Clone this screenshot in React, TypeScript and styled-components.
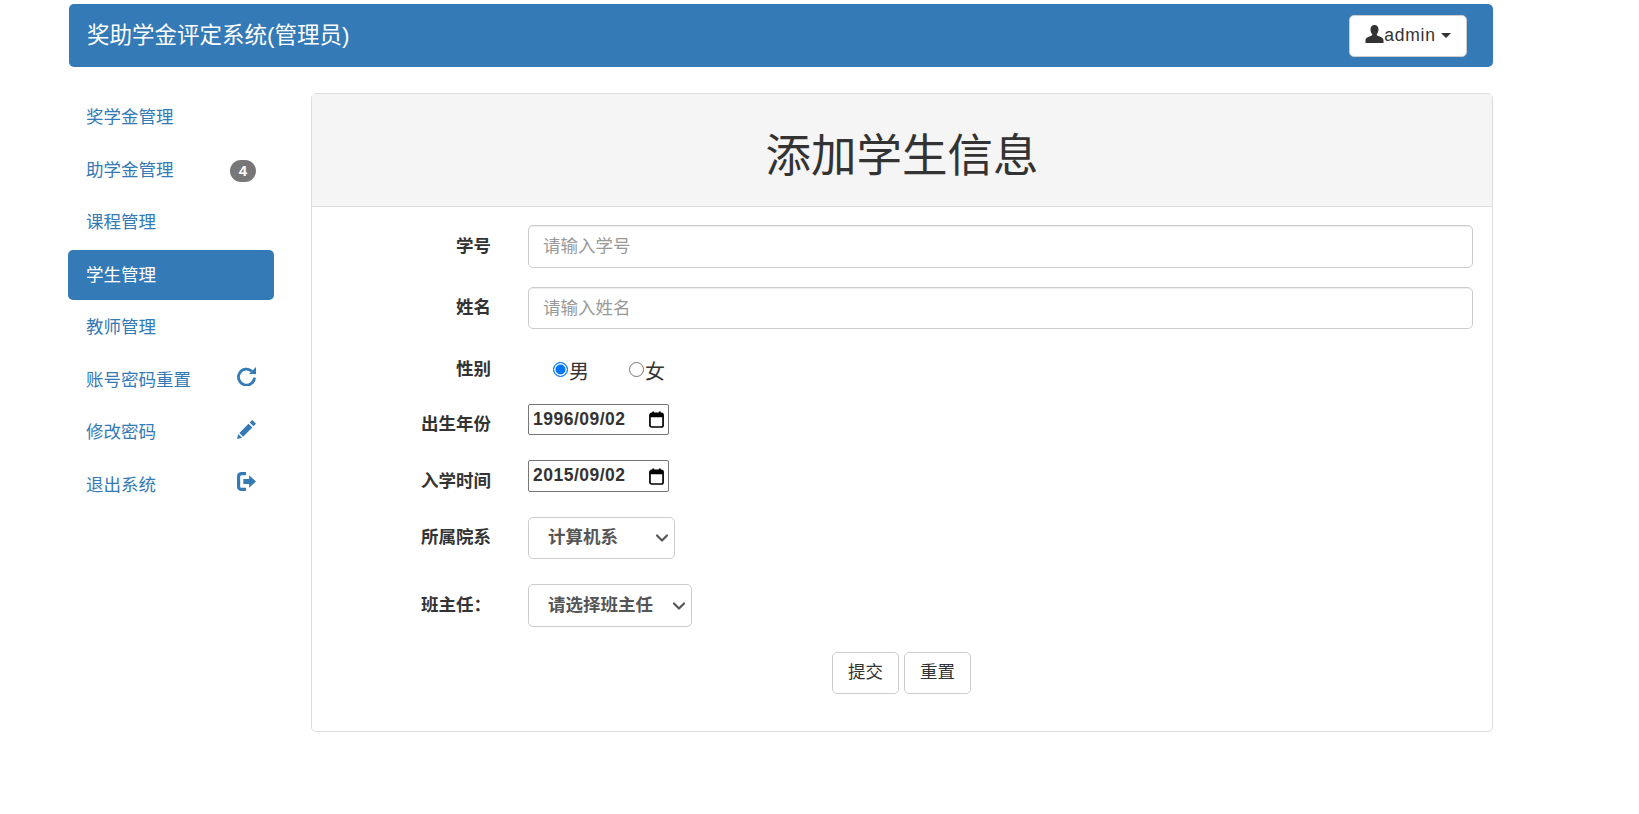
import React from 'react'
import styled, { createGlobalStyle } from 'styled-components'
import { ChevronDown } from 'lucide-react'

const GlobalStyle = createGlobalStyle`
  html, body {
    margin: 0;
    padding: 0;
    background: #fff;
  }
  body {
    font-family: "Liberation Sans", "Noto Sans CJK SC", sans-serif;
    font-size: 17.5px;
    line-height: 1.43;
    color: #333;
  }
  * {
    box-sizing: border-box;
  }
`

const menu = [
  { text: '奖学金管理' },
  { text: '助学金管理', badge: '4' },
  { text: '课程管理' },
  { text: '学生管理', active: true },
  { text: '教师管理' },
  { text: '账号密码重置', icon: 'refresh' },
  { text: '修改密码', icon: 'pencil' },
  { text: '退出系统', icon: 'logout' }
]

const MenuIcon = ({ name }: { name?: string }) => {
  if (name === 'refresh') {
    return <IconSvg viewBox="0 0 18 18">
      <path d="M16.6 10A7.6 7.6 0 1 1 14.2 4" fill="none" stroke="#337ab7" strokeWidth="2.6"/>
      <path d="M18 0v6.600h-6.600z" fill="#337ab7"/>
    </IconSvg>
  }
  if (name === 'pencil') {
    return <IconSvg viewBox="0 0 18 18">
      <path d="M0 18l1.200-4.800 3.600 3.600zM2.200 12.200l8.700-8.700 3.600 3.600-8.700 8.700zM12 2.400L14.400 0 18 3.600l-2.400 2.400z" fill="#337ab7"/>
    </IconSvg>
  }
  if (name === 'logout') {
    return <IconSvg viewBox="0 0 18 18">
      <path d="M8.500 1.500H4A2.800 2.800 0 0 0 1.500 4.300v9.400A2.800 2.800 0 0 0 4 16.500h4.500" fill="none" stroke="#337ab7" strokeWidth="3"/>
      <path d="M6 6.600h5.500V3L18 9l-6.500 6v-3.600H6z" fill="#337ab7"/>
    </IconSvg>
  }
  return null
}

const UserIcon = () => (
  <UserSvg viewBox="0 0 18 18">
    <path d="M9 0c2.600 0 4 2 4 4.500 0 1.900-.7 3.400-1.500 4.400-.4.600-.3 1.300.3 1.600 2.300 1 6.200 2.100 6.200 4.500V18H0v-3c0-2.400 3.900-3.500 6.200-4.500.6-.3.700-1 .3-1.600C5.700 7.900 5 6.400 5 4.500 5 2 6.400 0 9 0z" fill="#333"/>
  </UserSvg>
)

const CalendarIcon = () => (
  <CalendarSvg viewBox="0 0 16 18">
    <path d="M1 4.500a2 2 0 0 1 2-2h10a2 2 0 0 1 2 2v10.500a2 2 0 0 1-2 2H3a2 2 0 0 1-2-2z" fill="none" stroke="#000" strokeWidth="1.800"/>
    <path d="M1 3h14v3.500H1zM3.500 0.500h2V3h-2zM10.500 0.500h2V3h-2z" fill="#000"/>
  </CalendarSvg>
)

export default function App () {
  return <>
    <GlobalStyle/>
    <Page>
      <TopBar>
        <Brand>奖助学金评定系统(管理员)</Brand>
        <UserButton>
          <UserIcon/><UserName>admin</UserName><Caret/>
        </UserButton>
      </TopBar>
      <Body>
        <Side>
          {menu.map(item => (
            <SideItem key={item.text} $active={item.active}>
              {item.text}
              {item.badge && <Badge>{item.badge}</Badge>}
              {item.icon && <SideIcon><MenuIcon name={item.icon}/></SideIcon>}
            </SideItem>
          ))}
        </Side>
        <Panel>
          <PanelHead>添加学生信息</PanelHead>
          <PanelBody>
            <Row $h={43} $mb={19}>
              <Label>学号</Label>
              <TextInput placeholder="请输入学号"/>
            </Row>
            <Row $h={42} $mb={24}>
              <Label>姓名</Label>
              <TextInput placeholder="请输入姓名"/>
            </Row>
            <Row $h={32} $mb={19}>
              <Label $drop={2}>性别</Label>
              <RadioGroup>
                <RadioItem><Radio $on/><RadioText>男</RadioText></RadioItem>
                <RadioItem><Radio/><RadioText>女</RadioText></RadioItem>
              </RadioGroup>
            </Row>
            <Row $h={31} $mb={25}>
              <Label $drop={10}>出生年份</Label>
              <DateBox>1996/09/02<CalendarIcon/></DateBox>
            </Row>
            <Row $h={32} $mb={25}>
              <Label $drop={10}>入学时间</Label>
              <DateBox>2015/09/02<CalendarIcon/></DateBox>
            </Row>
            <Row $h={42} $mb={25}>
              <Label>所属院系</Label>
              <SelectBox $w={147}>计算机系<ChevronDown size={20} strokeWidth={2.6}/></SelectBox>
            </Row>
            <Row $h={43} $mb={25}>
              <Label>班主任：</Label>
              <SelectBox $w={164}>请选择班主任<ChevronDown size={20} strokeWidth={2.6}/></SelectBox>
            </Row>
            <Buttons>
              <Btn>提交</Btn>
              <Btn>重置</Btn>
            </Buttons>
          </PanelBody>
        </Panel>
      </Body>
    </Page>
  </>
}

const Page = styled.div`
  width: 1424px;
  margin: 4px 0 0 69px;
`

const TopBar = styled.header`
  height: 63px;
  padding: 0 26px 0 18px;
  display: flex;
  align-items: center;
  justify-content: space-between;
  border-radius: 5px;
  background: #337ab7;
`

const Brand = styled.div`
  padding-top: 2px;
  font-size: 22.5px;
  color: #fff;
`

const UserButton = styled.div`
  width: 118px;
  height: 42px;
  display: flex;
  align-items: center;
  justify-content: center;
  border-radius: 5px;
  border: 1px solid #ccc;
  background: #fff;
  color: #333;
`

const UserSvg = styled.svg`
  width: 19px;
  height: 18px;
  margin-bottom: 4px;
`

const UserName = styled.span`
  letter-spacing: .8px;
`

const Caret = styled.span`
  margin-left: 5px;
  border-top: 5px solid #333;
  border-left: 5px solid transparent;
  border-right: 5px solid transparent;
`

const Body = styled.div`
  margin: 26px 0 0 -1px;
  display: flex;
  align-items: flex-start;
`

const Side = styled.nav`
  width: 206px;
  margin: -.5px 37px 0 0;
  display: flex;
  flex-direction: column;
  gap: 2.5px;
`

const SideItem = styled.div<{ $active?: boolean }>`
  height: 50px;
  padding: 1px 18px 0;
  display: flex;
  align-items: center;
  justify-content: space-between;
  border-radius: 5px;
  color: ${p => p.$active ? '#fff' : '#337ab7'};
  background: ${p => p.$active ? '#337ab7' : 'transparent'};
`

const Badge = styled.span`
  width: 26px;
  height: 22px;
  display: flex;
  align-items: center;
  justify-content: center;
  border-radius: 11px;
  font-size: 15px;
  font-weight: 700;
  color: #fff;
  background: #777;
`

const SideIcon = styled.span`
  margin-bottom: 8px;
  display: flex;
`

const IconSvg = styled.svg`
  width: 19px;
  height: 19px;
`

const Panel = styled.section`
  width: 1182px;
  border: 1px solid #ddd;
  border-radius: 5px;
`

const PanelHead = styled.h1`
  margin: 0;
  height: 113px;
  padding-top: 14px;
  display: flex;
  align-items: center;
  justify-content: center;
  border-bottom: 1px solid #ddd;
  background: #f5f5f5;
  font-size: 45.5px;
  font-weight: 400;
  color: #333;
`

const PanelBody = styled.div`
  padding: 18px 19px 37px 0;
`

const Row = styled.div<{ $h: number, $mb: number }>`
  height: ${p => p.$h}px;
  margin-bottom: ${p => p.$mb}px;
  display: flex;
  align-items: center;
`

const Label = styled.label<{ $drop?: number }>`
  width: 179px;
  margin-right: 37px;
  padding-top: ${p => p.$drop ?? 0}px;
  text-align: right;
  font-weight: 700;
`

const TextInput = styled.input`
  flex: 1;
  height: 100%;
  padding: 0 14px;
  border: 1px solid #ccc;
  border-radius: 5px;
  box-shadow: inset 0 1px 1px rgba(0, 0, 0, .075);
  outline: none;
  font: inherit;
  color: #555;
  &::placeholder {
    color: #999;
  }
`

const RadioGroup = styled.div`
  display: flex;
  gap: 40px;
  padding-left: 25px;
`

const RadioItem = styled.span`
  display: flex;
  align-items: center;
`

const Radio = styled.span<{ $on?: boolean }>`
  width: 15px;
  height: 15px;
  border-radius: 50%;
  border: ${p => p.$on ? '1.5px solid #0075ff' : '1px solid #767676'};
  background: ${p => p.$on ? '#0075ff' : '#fff'};
  box-shadow: ${p => p.$on ? 'inset 0 0 0 1.5px #fff' : 'none'};
`

const RadioText = styled.span`
  margin-left: 1px;
  padding-top: 6px;
  font-size: 20px;
`

const DateBox = styled.div`
  width: 141px;
  height: 100%;
  padding: 0 4px;
  display: flex;
  align-items: center;
  justify-content: space-between;
  border: 1px solid #767676;
  border-radius: 2px;
  letter-spacing: .5px;
  font-weight: 700;
`

const CalendarSvg = styled.svg`
  width: 15px;
  height: 17px;
`

const SelectBox = styled.div<{ $w: number }>`
  width: ${p => p.$w}px;
  height: 100%;
  padding: 0 2px 0 19px;
  display: flex;
  align-items: center;
  justify-content: space-between;
  border: 1px solid #ccc;
  border-radius: 5px;
  font-weight: 700;
  color: #555;
`

const Buttons = styled.div`
  display: flex;
  justify-content: center;
  gap: 5px;
  padding-left: 18px;
`

const Btn = styled.div`
  width: 67px;
  height: 42px;
  display: flex;
  align-items: center;
  justify-content: center;
  border: 1px solid #ccc;
  border-radius: 5px;
  color: #333;
`
